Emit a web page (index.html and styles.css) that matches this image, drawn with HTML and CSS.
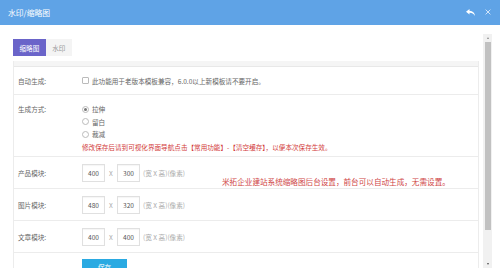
FILE: index.html
```html
<!DOCTYPE html>
<html lang="zh-CN">
<head>
    <meta charset="UTF-8">
    <meta name="viewport" content="width=device-width, initial-scale=1.0">
    <title>水印/缩略图</title>
    <link rel="stylesheet" href="styles.css">
</head>
<body>
    <div class="modal">
        <div class="modal-head">
            <span class="title">水印/缩略图</span>
            <span class="tools">
                <svg class="icon-reply" width="9" height="7" viewBox="0 0 18 14">
                    <path d="M7 0 L0 5.5 L7 11 V7.5 C11.5 7.3 15 8.8 18 14 C17.4 7.6 13.6 3.9 7 3.5 Z" fill="#fff"/>
                </svg>
                <svg class="icon-close" width="6" height="6" viewBox="0 0 10 10">
                    <path d="M1 1 L9 9 M9 1 L1 9" stroke="#e6f0fb" stroke-width="1.4"/>
                </svg>
            </span>
        </div>
        <div class="modal-body">
            <div class="scroll-area">
                <div class="content">
                    <div class="tabs">
                        <span class="tab active">缩略图</span>
                        <span class="tab">水印</span>
                    </div>
                    <div class="panel">
                        <div class="panel-top"></div>
                        <div class="row row-short">
                            <div class="label">自动生成:</div>
                            <div class="field">
                                <label class="opt"><span class="checkbox"></span>此功能用于老版本模板兼容，6.0.0以上新模板请不要开启。</label>
                            </div>
                        </div>
                        <div class="row row-tall">
                            <div class="label">生成方式:</div>
                            <div class="field field-stack">
                                <label class="opt"><span class="radio checked"></span>拉伸</label>
                                <label class="opt"><span class="radio"></span>留白</label>
                                <label class="opt"><span class="radio"></span>裁减</label>
                                <div class="note">修改保存后请到可视化界面导航点击【常用功能】-【清空缓存】，以便本次保存生效。</div>
                            </div>
                        </div>
                        <div class="row row-size">
                            <div class="label">产品模块:</div>
                            <div class="field">
                                <span class="size-input">400</span>
                                <span class="times">X</span>
                                <span class="size-input">300</span>
                                <span class="unit">(宽 X 高)(像素)</span>
                                <span class="tip">米拓企业建站系统缩略图后台设置，前台可以自动生成，无需设置。</span>
                            </div>
                        </div>
                        <div class="row row-size">
                            <div class="label">图片模块:</div>
                            <div class="field">
                                <span class="size-input">480</span>
                                <span class="times">X</span>
                                <span class="size-input">320</span>
                                <span class="unit">(宽 X 高)(像素)</span>
                            </div>
                        </div>
                        <div class="row row-size">
                            <div class="label">文章模块:</div>
                            <div class="field">
                                <span class="size-input">400</span>
                                <span class="times">X</span>
                                <span class="size-input">400</span>
                                <span class="unit">(宽 X 高)(像素)</span>
                            </div>
                        </div>
                        <div class="row row-submit">
                            <div class="label"></div>
                            <div class="field">
                                <button class="btn-save">保存</button>
                            </div>
                        </div>
                    </div>
                </div>
                <div class="scrollbar">
                    <span class="arrow arrow-up"></span>
                    <span class="thumb"></span>
                    <span class="track"></span>
                    <span class="arrow arrow-down"></span>
                </div>
            </div>
        </div>
    </div>
</body>
</html>
```

FILE: styles.css
```css
body {
    margin: 0;
    background: #fff;
    font-family: "Noto Sans CJK SC", "Liberation Sans", sans-serif;
    color: #555;
    font-size: 6.6px;
}
.modal {
    width: 500px;
    height: 275px;
    overflow: hidden;
    background: #fff;
}
.modal-head {
    height: 25px;
    background: #5fa3e6;
    color: #fff;
    display: flex;
    align-items: center;
    justify-content: space-between;
    padding: 0 9px 0 8px;
}
.title {
    font-size: 7.8px;
    padding-bottom: 1px;
}
.tools {
    display: flex;
    align-items: center;
    gap: 10px;
    padding-bottom: 1px;
}
.modal-body {
    padding: 9px 8px 0 0;
}
.scroll-area {
    height: 234px;
    display: flex;
    overflow: hidden;
}
.content {
    flex: 1;
    padding: 5px 4px 0 13px;
    overflow: hidden;
}
/* tabs */
.tabs {
    display: flex;
    height: 17px;
    margin-bottom: 5px;
}
.tab {
    display: flex;
    align-items: center;
    padding: 0 6.5px;
    background: #f4f4f4;
    color: #999;
    white-space: nowrap;
}
.tab.active {
    background: #6a64c9;
    color: #fff;
}
/* form panel */
.panel {
    border-left: 1px solid #ececec;
    border-right: 1px solid #ececec;
}
.panel-top {
    height: 5px;
    background: #f5f5f5;
    border-bottom: 1px solid #e8e8e8;
}
.row {
    display: flex;
    border-bottom: 1px solid #ececec;
}
.label {
    width: 64px;
    padding-left: 4px;
    flex-shrink: 0;
    color: #666;
}
.field {
    flex: 1;
    display: flex;
    align-items: center;
    color: #666;
}
.row-short {
    height: 27px;
    align-items: center;
}
.row-tall {
    height: 62px;
    line-height: 12.5px;
    padding-top: 8px;
    box-sizing: border-box;
}
.field-stack {
    flex-direction: column;
    align-items: flex-start;
}
.opt {
    display: flex;
    align-items: center;
}
.checkbox {
    width: 5px;
    height: 5px;
    border: 1px solid #bbb;
    border-radius: 1px;
    margin-right: 3px;
}
.radio {
    width: 5px;
    height: 5px;
    border: 1px solid #bbb;
    border-radius: 50%;
    margin-right: 3px;
    position: relative;
}
.radio.checked::after {
    content: "";
    position: absolute;
    left: 1px;
    top: 1px;
    width: 3px;
    height: 3px;
    border-radius: 50%;
    background: #777;
}
.note {
    color: #d23a3a;
}
.row-size {
    height: 31px;
    align-items: center;
}
.row-size .label {
    margin-top: 1px;
}
.row-size .field {
    align-self: stretch;
}
.size-input {
    width: 21px;
    height: 16px;
    border: 1px solid #e0e0e0;
    box-shadow: inset 0 1px 1px rgba(0, 0, 0, 0.04);
    display: flex;
    align-items: center;
    justify-content: center;
    color: #555;
}
.times {
    width: 12px;
    text-align: center;
    color: #aaa;
}
.unit {
    margin-left: 3px;
    color: #aaa;
}
.tip {
    align-self: flex-end;
    margin: 0 0 1px 37px;
    font-size: 7.6px;
    color: #cf4545;
}
.row-submit {
    border-bottom: none;
    padding-top: 6px;
}
.btn-save {
    width: 45px;
    height: 16px;
    border: none;
    background: #2aaae2;
    color: #fff;
    font-family: inherit;
    font-size: 6.6px;
    padding: 0;
}
/* fake scrollbar */
.scrollbar {
    width: 9px;
    display: flex;
    flex-direction: column;
    align-items: center;
    background: #f1f1f1;
}
.arrow {
    width: 0;
    height: 0;
    margin: 3px 0;
    border-left: 1.5px solid transparent;
    border-right: 1.5px solid transparent;
}
.arrow-up {
    border-bottom: 2px solid #8a8a8a;
}
.arrow-down {
    border-top: 2px solid #505050;
}
.thumb {
    width: 6px;
    height: 188px;
    background: #c1c1c1;
}
.track {
    flex: 1;
}
```
